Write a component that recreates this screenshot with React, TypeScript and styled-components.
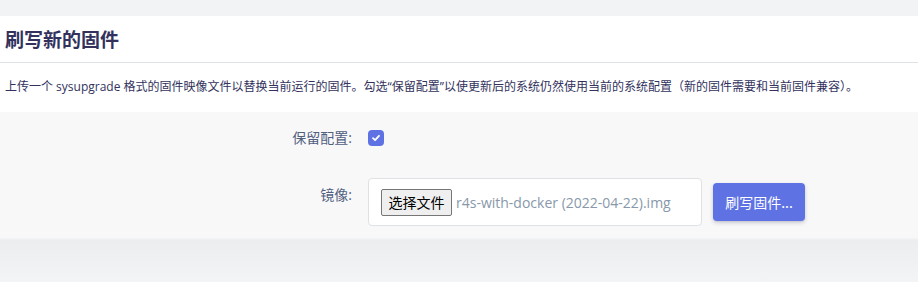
import React from 'react';
import styled, { createGlobalStyle } from 'styled-components';

const GlobalStyle = createGlobalStyle`
  html, body {
    margin: 0;
    padding: 0;
    background: #f3f4f6;
    font-family: 'Open Sans', 'Noto Sans CJK SC', sans-serif;
  }
`;

const Page = styled.div`
  width: 918px;
  height: 282px;
  box-sizing: border-box;
  padding-top: 16px;
  background: linear-gradient(#f2f3f5, #f2f3f5 239px, #ecedef 240px, #f3f4f6 282px);
  overflow: hidden;
`;

const Card = styled.section`
  background: #fff;
`;

const Title = styled.h3`
  margin: 0;
  height: 47px;
  box-sizing: border-box;
  padding: 8px 0 0 5px;
  font-family: 'Noto Sans CJK SC', sans-serif;
  font-size: 19px;
  font-weight: 700;
  line-height: 30px;
  color: #32325d;
  border-bottom: 1px solid #dee2e6;
`;

const Description = styled.p`
  margin: 0;
  height: 49px;
  box-sizing: border-box;
  padding: 14px 0 0 5px;
  font-size: 12px;
  line-height: 20px;
  color: #32325d;
`;

const Fields = styled.div`
  background: #f8f8f9;
  display: grid;
  grid-template-columns: 352px 1fr;
  column-gap: 16px;
  padding: 15px 0 12px;
`;

const Label = styled.label<{ $top: number }>`
  text-align: right;
  padding-top: ${(p) => p.$top}px;
  font-size: 14px;
  line-height: 20px;
  color: #525f7f;
`;

const Control = styled.div<{ $height: number; $top?: number }>`
  display: flex;
  align-items: center;
  gap: 11px;
  height: ${(p) => p.$height}px;
  margin-top: ${(p) => p.$top ?? 0}px;
`;

const Check = styled.span`
  width: 16px;
  height: 16px;
  border-radius: 4px;
  background: #5e72e4;
  display: flex;
  align-items: center;
  justify-content: center;
`;

const FileBox = styled.div`
  width: 334px;
  height: 48px;
  box-sizing: border-box;
  border: 1px solid #dee2e6;
  border-radius: 4px;
  background: #fff;
  display: flex;
  align-items: center;
  padding-left: 12px;
  gap: 4px;
`;

const NativeButton = styled.span`
  display: inline-flex;
  align-items: center;
  justify-content: center;
  width: 71px;
  height: 27px;
  box-sizing: border-box;
  border: 1px solid #767676;
  border-radius: 2px;
  background: #efefef;
  color: #000;
  font-family: 'Noto Sans CJK SC', sans-serif;
  font-size: 14px;
`;

const FileName = styled.span`
  font-size: 14px;
  color: #8898aa;
  white-space: nowrap;
`;

const PrimaryButton = styled.button`
  height: 38px;
  width: 92px;
  border: none;
  border-radius: 4px;
  background: #5e72e4;
  color: #fff;
  font-family: 'Noto Sans CJK SC', sans-serif;
  font-size: 14px;
  box-shadow: 0 2px 4px rgba(50, 50, 93, 0.2), 0 1px 2px rgba(0, 0, 0, 0.08);
  cursor: pointer;
`;

const Bottom = styled.div`
  height: 43px;
`;

export default function App() {
  return (
    <Page>
      <GlobalStyle />
      <Card>
        <Title>刷写新的固件</Title>
        <Description>
          上传一个 sysupgrade 格式的固件映像文件以替换当前运行的固件。勾选“保留配置”以使更新后的系统仍然使用当前的系统配置（新的固件需要和当前固件兼容）。
        </Description>
        <Fields>
          <Label $top={1}>保留配置:</Label>
          <Control $height={22}>
            <Check>
              <svg width="10" height="10" viewBox="0 0 10 10">
                <path d="M2 5.2 L4.1 7.2 L8 2.8" stroke="#fff" strokeWidth="1.8" fill="none" strokeLinecap="round" strokeLinejoin="round" />
              </svg>
            </Check>
          </Control>
          <Label $top={36}>镜像:</Label>
          <Control $height={48} $top={29}>
            <FileBox>
              <NativeButton>选择文件</NativeButton>
              <FileName>r4s-with-docker (2022-04-22).img</FileName>
            </FileBox>
            <PrimaryButton>刷写固件...</PrimaryButton>
          </Control>
        </Fields>
      </Card>
      <Bottom />
    </Page>
  );
}
